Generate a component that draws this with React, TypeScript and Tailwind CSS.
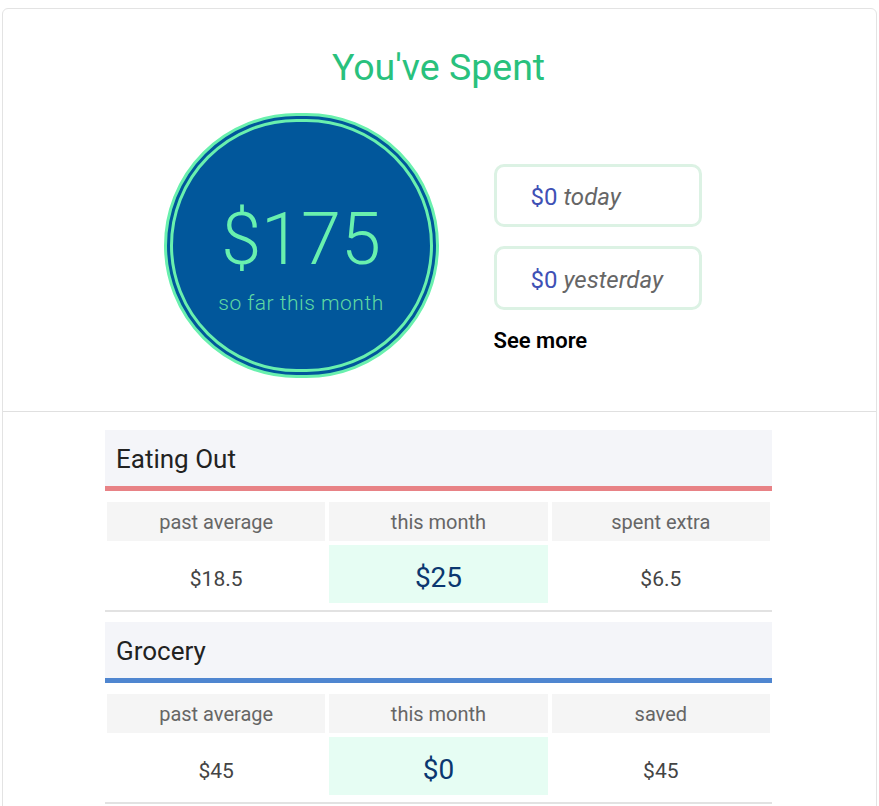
const CATEGORIES = [
  {
    name: 'Eating Out',
    bar: 'bg-[#e88286]',
    past: '$18.5',
    month: '$25',
    diffLabel: 'spent extra',
    diff: '$6.5',
  },
  {
    name: 'Grocery',
    bar: 'bg-[#4f86d0]',
    past: '$45',
    month: '$0',
    diffLabel: 'saved',
    diff: '$45',
  },
];

function CategoryCard({ cat, first }: { cat: (typeof CATEGORIES)[number]; first: boolean }) {
  return (
    <div className={`w-[667px] mx-auto ${first ? 'mt-[18px]' : 'mt-[10px]'}`}>
      {/* Header */}
      <div className="h-[56px] bg-[#f4f5f9] flex items-center px-[11px] pt-[2px]">
        <span className="text-[26px] text-[#222]">{cat.name}</span>
      </div>
      <div className={`h-[5px] ${cat.bar}`} />

      {/* Stats */}
      <div className="grid grid-cols-3 gap-x-[4px] gap-y-[4px] px-[2px] mt-[11px]">
        <div className="h-[39px] bg-[#f5f5f5] flex items-center justify-center text-[20px] text-[#666]">past average</div>
        <div className="h-[39px] bg-[#f5f5f5] flex items-center justify-center text-[20px] text-[#666]">this month</div>
        <div className="h-[39px] bg-[#f5f5f5] flex items-center justify-center text-[20px] text-[#666]">{cat.diffLabel}</div>
        <div className="h-[58px] flex items-center justify-center pt-[11px] text-[21px] text-[#444]">{cat.past}</div>
        <div className="h-[58px] bg-[#e6fdf3] flex items-center justify-center pt-[7px] text-[28px] text-[#0b3770]">{cat.month}</div>
        <div className="h-[58px] flex items-center justify-center pt-[11px] text-[21px] text-[#444]">{cat.diff}</div>
      </div>
      <div className="h-[2px] bg-[#e2e2e2] mt-[7px]" />
    </div>
  );
}

export default function App() {
  return (
    <div className="min-h-screen bg-white pt-2 px-[2px] font-['Roboto',sans-serif]">
      <div className="border border-[#e3e3e3] rounded-md bg-white">
        {/* Summary */}
        <div className="pt-[37px] pb-[33px] pr-[2px]">
          <h1 className="text-center text-[37.5px] leading-[42px] text-[#29c17d]">You've Spent</h1>
          <div className="flex justify-center gap-[55px] mt-[25px]">
            <div className="w-[275px] h-[265px] rounded-full border-[3px] border-[#69f0ae] bg-[#01579b] p-[3px]">
              <div className="w-full h-full rounded-full border-[3px] border-[#69f0ae] flex flex-col items-center pt-[82px]">
                <span className="text-[72px] leading-none font-light text-[#69f0ae]">$175</span>
                <span className="text-[21px] font-light text-[#5fd9a2] mt-[12px] tracking-[0.5px]">so far this month</span>
              </div>
            </div>
            <div className="w-[220px] mt-[51px]">
              <div className="w-[208px] h-[63px] rounded-[10px] border-[3px] border-[#dcf2e4] flex items-center pl-[34px] pt-[3px] text-[24px]">
                <span className="text-[#3f51b5]">$0</span>
                <span className="italic text-[#666] ml-[6px]">today</span>
              </div>
              <div className="w-[208px] h-[64px] rounded-[10px] border-[3px] border-[#dcf2e4] flex items-center pl-[34px] pt-[3px] text-[24px] mt-[19px]">
                <span className="text-[#3f51b5]">$0</span>
                <span className="italic text-[#666] ml-[6px]">yesterday</span>
              </div>
              <div className="mt-[14px] text-[22px] font-semibold text-black">See more</div>
            </div>
          </div>
        </div>
        <div className="h-px bg-[#e0e0e0]" />

        <div className="pr-[2px]">
          {CATEGORIES.map((c, i) => (
            <CategoryCard key={c.name} cat={c} first={i === 0} />
          ))}
        </div>
        <div className="h-8" />
      </div>
    </div>
  );
}
